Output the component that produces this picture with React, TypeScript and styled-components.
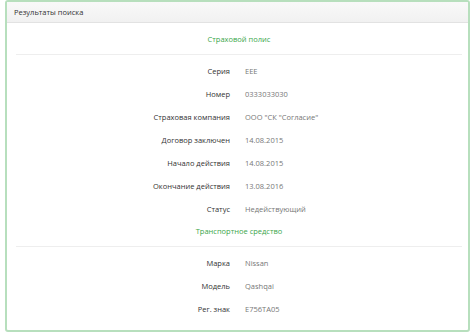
import styled, { createGlobalStyle } from "styled-components";

const GlobalStyle = createGlobalStyle`
  body {
    margin: 0;
    background: #ffffff;
    font-family: "Open Sans", "Liberation Sans", sans-serif;
  }
`;

const Panel = styled.div`
  margin: 0 4px 0 5px;
  height: 332px;
  box-sizing: border-box;
  border: 2px solid #b7dfbd;
  border-radius: 3px;
  background: #fff;
  overflow: hidden;
`;

const PanelHeading = styled.div`
  height: 20px;
  padding: 0 7px;
  display: flex;
  align-items: center;
  background: linear-gradient(#f9f9f9, #f1f1f1);
  border-bottom: 1px solid #e2e2e2;
  font-size: 7.5px;
  font-weight: 500;
  color: #333;
`;

const PanelBody = styled.div`
  padding: 5px 6px 10px 9px;
`;

const SectionTitle = styled.div`
  height: 23px;
  line-height: 23px;
  padding-bottom: 3px;
  margin-bottom: 4px;
  border-bottom: 1px solid #eeeeee;
  text-align: center;
  font-size: 7.5px;
  color: #3aa64a;
`;

const Row = styled.div`
  display: grid;
  grid-template-columns: 214px 1fr;
  column-gap: 15px;
  height: 23px;
  align-items: center;
  font-size: 7.5px;
`;

const Label = styled.div`
  text-align: right;
  font-weight: 500;
  color: #333;
`;

const Value = styled.div`
  color: #777;
`;

type Field = { label: string; value: string };

const policy: Field[] = [
  { label: "Серия", value: "EEE" },
  { label: "Номер", value: "0333033030" },
  { label: "Страховая компания", value: 'ООО "СК "Согласие"' },
  { label: "Договор заключен", value: "14.08.2015" },
  { label: "Начало действия", value: "14.08.2015" },
  { label: "Окончание действия", value: "13.08.2016" },
  { label: "Статус", value: "Недействующий" },
];

const vehicle: Field[] = [
  { label: "Марка", value: "Nissan" },
  { label: "Модель", value: "Qashqai" },
  { label: "Рег. знак", value: "E756TA05" },
];

const Fields = ({ items }: { items: Field[] }) => (
  <>
    {items.map((f) => (
      <Row key={f.label}>
        <Label>{f.label}</Label>
        <Value>{f.value}</Value>
      </Row>
    ))}
  </>
);

const App = () => {
  return (
    <>
      <GlobalStyle />
      <Panel>
        <PanelHeading>Результаты поиска</PanelHeading>
        <PanelBody>
          <SectionTitle>Страховой полис</SectionTitle>
          <Fields items={policy} />
          <SectionTitle>Транспортное средство</SectionTitle>
          <Fields items={vehicle} />
        </PanelBody>
      </Panel>
    </>
  );
};

export default App;
